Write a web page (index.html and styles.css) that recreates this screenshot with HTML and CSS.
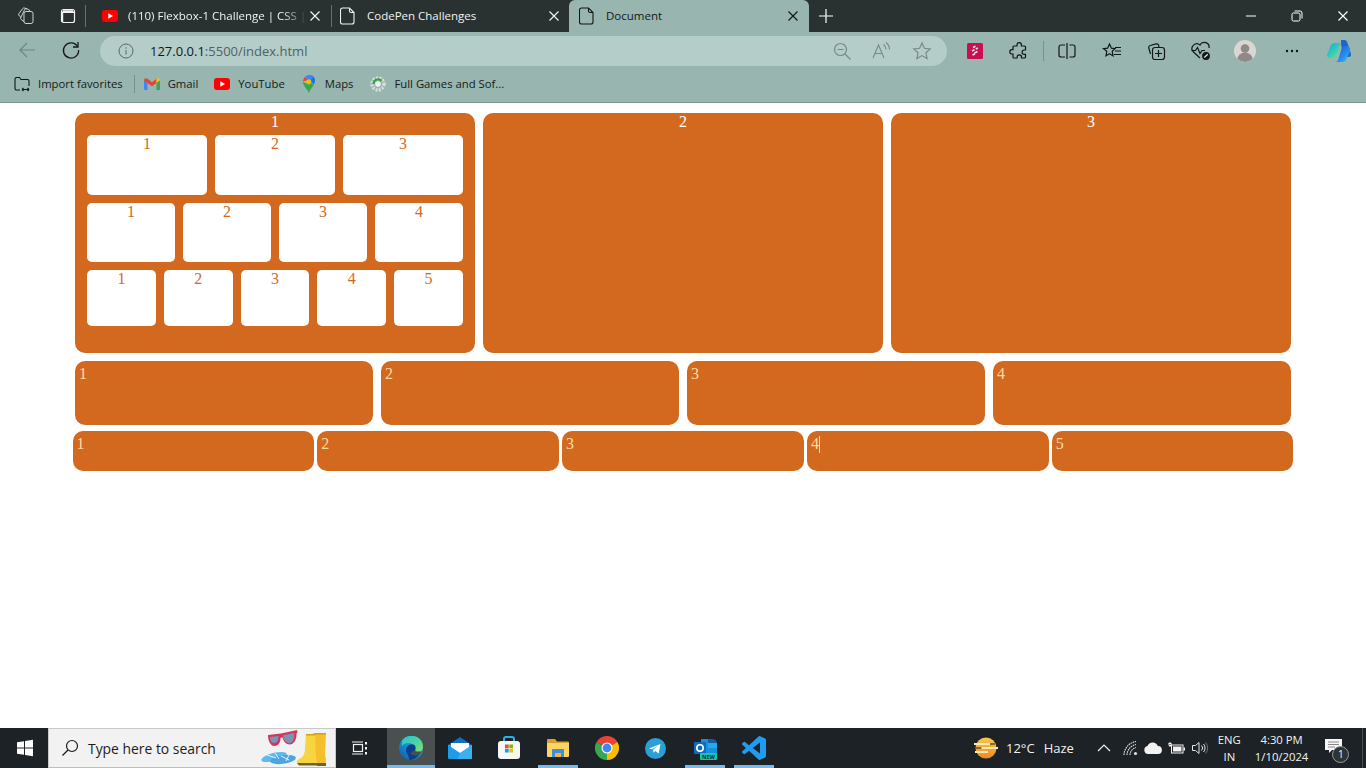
FILE: index.html
```html
<!DOCTYPE html>
<html>
  <head>
    <meta charset="UTF-8" />
    <title>Document</title>
    <link rel="stylesheet" href="styles.css">
  </head>
  <body>
    <svg class="sprites" width="0" height="0">
      <symbol id="doc" viewBox="0 0 16 18">
        <path d="M2.500 1h7l4.500 4.500V15a2 2 0 0 1-2 2h-9.500a2 2 0 0 1-2-2V3a2 2 0 0 1 2-2z M9.500 1v3a1.500 1.500 0 0 0 1.500 1.500h3" fill="none" stroke="currentColor" stroke-width="1.100"/>
      </symbol>
      <symbol id="yt" viewBox="0 0 16 12">
        <rect width="16" height="12" rx="3" fill="#f00"/>
        <path d="M6.300 3.300 11 6 6.300 8.700z" fill="#fff"/>
      </symbol>
      <symbol id="cross" viewBox="0 0 12 12">
        <path d="M1.500 1.500l9 9M10.500 1.500l-9 9" fill="none" stroke="currentColor" stroke-width="1.200"/>
      </symbol>
    </svg>

    <header class="chrome">
      <div class="tabstrip">
        <svg class="strip-btn" width="20" height="20" viewBox="0 0 20 20" fill="none" stroke="#dfe4e2" stroke-width=".9">
          <rect x="8" y="5.500" width="9" height="12" rx="2"/>
          <path d="M8 15.500 5.500 13.800a2 2 0 0 1-.6-2.500L8.500 3.800a2 2 0 0 1 2.600-.9L14 4.500"/>
          <path d="M5 11.500 3.300 10a2 2 0 0 1-.3-2.500L6.500 2.800a2 2 0 0 1 2.400-.7L11 3"/>
        </svg>
        <svg class="strip-btn strip-btn-second" width="16" height="16" viewBox="0 0 16 16" fill="none" stroke="#f2f4f3" stroke-width="1.200">
          <rect x="1.500" y="1.500" width="13" height="13" rx="2"/>
          <path d="M1.500 4.300h13M3 3h10" stroke-width="1.600"/>
          <path d="M2.600 4v10"/>
        </svg>
        <div class="tab tab-first">
          <svg class="favicon" width="16" height="12"><use href="#yt"/></svg>
          <span class="tab-title">(110) Flexbox-1 Challenge | CSS |</span>
          <svg class="tab-close" width="12" height="12"><use href="#cross"/></svg>
        </div>
        <div class="tab tab-second">
          <svg class="favicon" width="16" height="18"><use href="#doc"/></svg>
          <span class="tab-title">CodePen Challenges</span>
          <svg class="tab-close" width="12" height="12"><use href="#cross"/></svg>
        </div>
        <div class="tab tab-active">
          <svg class="favicon" width="16" height="18"><use href="#doc"/></svg>
          <span class="tab-title">Document</span>
          <svg class="tab-close" width="12" height="12"><use href="#cross"/></svg>
        </div>
        <svg class="new-tab" width="16" height="16" viewBox="0 0 16 16"><path d="M8 1v14M1 8h14" stroke="#fff" stroke-width="1.200"/></svg>
        <div class="window-btns">
          <svg width="12" height="12" viewBox="0 0 12 12"><path d="M1 6h10" stroke="#fff" stroke-width="1"/></svg>
          <svg width="12" height="12" viewBox="0 0 12 12" fill="none" stroke="#fff" stroke-width="1"><rect x="1" y="3" width="8" height="8" rx="1.500"/><path d="M3.500 1h5.500a2 2 0 0 1 2 2v5.500"/></svg>
          <svg class="win-close" width="12" height="12"><use href="#cross"/></svg>
        </div>
      </div>

      <div class="toolbar">
        <svg class="back" width="20" height="20" viewBox="0 0 20 20" fill="none" stroke="#6f8783" stroke-width="1.200"><path d="M18 10H3M10 3l-7 7 7 7"/></svg>
        <svg class="reload" width="20" height="20" viewBox="0 0 20 20" fill="none" stroke="#151a19" stroke-width="1.300"><path d="M16.500 6.500A7.600 7.600 0 1 0 17.600 10"/><path d="M17 2v5h-5"/></svg>
        <div class="address">
          <svg width="16" height="16" viewBox="0 0 16 16" fill="none" stroke="#59696a" stroke-width="1"><circle cx="8" cy="8" r="7"/><path d="M8 7v4.500M8 4.300v1.400"/></svg>
          <span class="url"><b>127.0.0.1</b>:5500/index.html</span>
          <div class="address-tools">
            <svg width="20" height="20" viewBox="0 0 20 20" fill="none" stroke="#778a88" stroke-width="1.200"><circle cx="8.500" cy="8.500" r="6"/><path d="M5.500 8.500h6M13 13l5.500 5.500"/></svg>
            <svg class="read-aloud" width="20" height="20" viewBox="0 0 20 20" fill="none" stroke="#778a88" stroke-width="1.100"><path d="M2 17 7.500 4 13 17M4 12.500h7"/><path d="M12.500 3.500a6 6 0 0 1 2.500 5M15 1.500a9 9 0 0 1 3.500 7"/></svg>
            <svg width="20" height="20" viewBox="0 0 20 20" fill="none" stroke="#778a88" stroke-width="1.200"><path d="M10 2l2.400 5.300 5.800.6-4.300 3.900 1.200 5.700-5.100-2.900-5.100 2.900 1.200-5.700L1.800 7.900l5.800-.6z"/></svg>
          </div>
        </div>
        <svg class="tool ext-s" width="16" height="16" viewBox="0 0 16 16"><rect width="16" height="16" rx="1.500" fill="#c80f51"/><path d="M6 4.500l2.500-1.200M8.800 6l2-1M5 8l2.500-1.200M7.500 10l3-1.500M5.500 12l2.500-1.200" fill="none" stroke="#f6e3ea" stroke-width="1.500"/></svg>
        <svg class="tool ext-puzzle" width="20" height="20" viewBox="0 0 20 20" fill="none" stroke="#111716" stroke-width="1.200"><path d="M8 3.800a2.200 2.200 0 0 1 4.400 0V5h3.100a1 1 0 0 1 1 1v3h-1.200a2.200 2.200 0 0 0 0 4.400h1.200v2.600a1 1 0 0 1-1 1h-3v-1a2.200 2.200 0 0 0-4.400 0v1H5a1 1 0 0 1-1-1v-3H3a2.200 2.200 0 0 1 0-4.400h1V6a1 1 0 0 1 1-1h3z"/></svg>
        <span class="tool-sep"></span>
        <svg class="tool ext-split" width="20" height="20" viewBox="0 0 20 20" fill="none" stroke="#111716" stroke-width="1.200"><path d="M8 4H4a2 2 0 0 0-2 2v8a2 2 0 0 0 2 2h4M12.500 4H16a2 2 0 0 1 2 2v8a2 2 0 0 1-2 2h-3.500M10 2v16"/></svg>
        <svg class="tool ext-fav" width="20" height="20" viewBox="0 0 20 20" fill="none" stroke="#111716" stroke-width="1.200"><path d="M7.500 3l1.900 4.200 3.600.4-2.800 2.700.8 4.600-3.500-2.100L4 14.900l.8-4.600L1.500 7.600l4.100-.4zM13 6.500h6M13 10h6M12 13.500h7"/></svg>
        <svg class="tool ext-coll" width="20" height="20" viewBox="0 0 20 20" fill="none" stroke="#111716" stroke-width="1.200"><path d="M4.500 13 2.800 7A2 2 0 0 1 4.200 4.500l6-1.600a2 2 0 0 1 2.400 1.300L13 6"/><rect x="6.500" y="6.500" width="12" height="12" rx="2.500"/><path d="M12.500 9v7M9 12.500h7"/></svg>
        <svg class="tool ext-heart" width="22" height="20" viewBox="0 0 22 20" fill="none" stroke="#111716" stroke-width="1.200"><path d="M10 17 3 10.500A4.800 4.800 0 0 1 10 4a4.800 4.800 0 0 1 9 3"/><path d="M1.500 9.500h4l2-3 2.500 6 2-3h3"/><circle cx="16" cy="15" r="4.500" fill="#111716" stroke="#98b5af"/><path d="M14.300 16.500l3.400-3.200" stroke="#dfe8e6"/></svg>
        <svg class="tool ext-avatar" width="22" height="22" viewBox="0 0 22 22"><circle cx="11" cy="11" r="11" fill="#d9d6d4"/><circle cx="11" cy="8.500" r="4.300" fill="#8f8a87"/><path d="M3.500 19a7.500 6.500 0 0 1 15 0 11 11 0 0 1-15 0z" fill="#8f8a87"/></svg>
        <svg class="tool ext-dots" width="14" height="4" viewBox="0 0 14 4"><circle cx="2" cy="2" r="1.200" fill="#111716"/><circle cx="7" cy="2" r="1.200" fill="#111716"/><circle cx="12" cy="2" r="1.200" fill="#111716"/></svg>
        <svg class="tool ext-copilot" width="24" height="24" viewBox="0 0 24 24">
          <defs>
            <linearGradient id="copA" x1="0" y1="0" x2="1" y2="1"><stop offset="0" stop-color="#1c9fe0"/><stop offset=".6" stop-color="#3bd4b0"/><stop offset="1" stop-color="#b6e04d"/></linearGradient>
            <linearGradient id="copB" x1="0" y1="0" x2="1" y2="1"><stop offset="0" stop-color="#1d4fd0"/><stop offset=".6" stop-color="#2690ea"/><stop offset="1" stop-color="#3ecbf0"/></linearGradient>
          </defs>
          <path d="M14 1h3.500c1.500 0 2.300 1 2.800 2.500L24 15c.4 1.500-.6 3-2 3h-4.500l-3.500-12z" fill="#1b66c9"/>
          <path d="M8.500 4h7c-1.300 0-2.300.9-2.700 2.300L10 16c-.6 2-1.500 3-3.500 3H3.200C1 19 -.4 17.500.2 15.500L3.500 7C4.300 5 6 4 8.500 4z" fill="url(#copA)"/>
          <path d="M17 7c-1.200 0-1.900.8-2.300 2l-3.200 11c-.4 1.500-1.500 3-3.500 3h7.500c2 0 3.300-1 4-3L23 12c.7-2.500-.8-5-3-5z" fill="url(#copB)"/>
        </svg>
      </div>

      <div class="favbar">
        <div class="fav">
          <svg width="16" height="16" viewBox="0 0 16 16" fill="none" stroke="#111716" stroke-width="1.100"><path d="M6 14H2.500A1.500 1.500 0 0 1 1 12.500V3a1.500 1.500 0 0 1 1.500-1.500h3L7 3.500h6.500A1.500 1.500 0 0 1 15 5v5"/><path d="M8 13.500h7M8 13.500l1.500-1.500M8 13.500 9.500 15M15 13.500 13.500 12M15 13.500 13.500 15"/></svg>
          <span>Import favorites</span>
        </div>
        <span class="fav-sep"></span>
        <div class="fav">
          <svg width="16" height="12" viewBox="0 0 16 12">
            <path d="M0 2v9a1 1 0 0 0 1 1h2.500V5z" fill="#4285f4"/>
            <path d="M16 2v9a1 1 0 0 1-1 1h-2.500V5z" fill="#34a853"/>
            <path d="M0 2.500C0 .5 2 -.5 3.500.8L8 4.300 12.500.8V5L8 8.300 3.500 5z" fill="#ea4335"/>
            <path d="M12.500.8C14-.5 16 .5 16 2.500L12.500 5z" fill="#fbbc04"/>
          </svg>
          <span>Gmail</span>
        </div>
        <div class="fav">
          <svg width="16" height="12"><use href="#yt"/></svg>
          <span>YouTube</span>
        </div>
        <div class="fav">
          <svg width="16" height="18" viewBox="0 0 16 18">
            <path d="M8 18C6.500 14.500 2 11 2 6.500L6 8.500C6.500 10 9.500 10 10 8l3 1c-1.500 3.500-4 5.500-5 9z" fill="#34a853"/>
            <path d="M2 6.500C2 4.500 3 3 4 2l3.500 3z" fill="#ea4335"/>
            <path d="M4 2c2.500-2.500 6.500-2.500 8.500-.5L8 6z" fill="#4285f4"/>
            <path d="M12.500 1.500C14.500 3.500 14.500 7 13 9l-5-3z" fill="#1a73e8"/>
            <path d="M2 6.500 7 5.500 6 8.500z" fill="#fbbc04"/>
            <circle cx="8" cy="6.500" r="2.300" fill="#fbbc04"/>
          </svg>
          <span>Maps</span>
        </div>
        <div class="fav fav-last">
          <svg width="16" height="16" viewBox="0 0 16 16">
            <circle cx="8" cy="8" r="6" fill="none" stroke="#d9dcdb" stroke-width="3.400" stroke-dasharray="2 1.200"/>
            <path d="M3.500 8a4.500 4.500 0 0 1 8-3" fill="none" stroke="#2ea43b" stroke-width="2"/>
            <circle cx="8" cy="8" r="2.800" fill="#f1f3f2"/>
          </svg>
          <span>Full Games and Sof...</span>
        </div>
      </div>
    </header>

    <main class="page">
      <section class="row-top">
        <div class="card">
          1
          <div class="inner-rows">
            <div class="inner-row inner-row-a">
              <div class="box">1</div>
              <div class="box">2</div>
              <div class="box">3</div>
            </div>
            <div class="inner-row inner-row-b">
              <div class="box">1</div>
              <div class="box">2</div>
              <div class="box">3</div>
              <div class="box">4</div>
            </div>
            <div class="inner-row inner-row-c">
              <div class="box">1</div>
              <div class="box">2</div>
              <div class="box">3</div>
              <div class="box">4</div>
              <div class="box">5</div>
            </div>
          </div>
        </div>
        <div class="card">2</div>
        <div class="card">3</div>
      </section>
      <section class="row-mid">
        <div class="strip">1</div>
        <div class="strip">2</div>
        <div class="strip">3</div>
        <div class="strip">4</div>
      </section>
      <section class="row-low">
        <div class="strip">1</div>
        <div class="strip">2</div>
        <div class="strip">3</div>
        <div class="strip">4<span class="caret"></span></div>
        <div class="strip">5</div>
      </section>
    </main>

    <footer class="taskbar">
      <div class="start">
        <svg width="18" height="18" viewBox="0 0 18 18" fill="#fff"><path d="M1 3.200 8 2.200V8.400H1zM9 2 17 .8V8.400H9zM1 9.500h7v6.300l-7-1zM9 9.500h8v7.700l-8-1.200z"/></svg>
      </div>
      <div class="search">
        <svg width="18" height="18" viewBox="0 0 18 18" fill="none" stroke="#1a1a1a" stroke-width="1.200"><circle cx="11" cy="7" r="5.500"/><path d="M7 11 1.500 16.500"/></svg>
        <span class="search-text">Type here to search</span>
        <svg class="search-art" width="66" height="38" viewBox="0 0 66 38">
          <path d="M7 6 20 4.500 34 1.500l2-.5.500 2.500-1 1c.3 6-2.500 11-7 11-3.500 0-6-3-7-7l-2 .3c.3 4.200-2 8.200-6 8.200S7 12 7 6z" fill="#d4365a"/>
          <path d="M9 8l8.500-1c.2 3.500-1.300 7-4.300 7S9 11.500 9 8zM22 6.300l11.300-2.300c.5 5-1.500 10.200-4.800 10.200S22 10.500 22 6.300z" fill="#7b93b4"/>
          <ellipse cx="13" cy="28" rx="13" ry="4" transform="rotate(-14 13 28)" fill="#62b8ec"/>
          <ellipse cx="22" cy="30.500" rx="13" ry="4.300" transform="rotate(-8 22 30.500)" fill="#4ba5e2"/>
          <path d="M6 26l9 3M14 24l4 6M20 27l8 4M28 26l-3 6" fill="none" stroke="#e3f2fc" stroke-width="1"/>
          <path d="M52 4h13l-1 22c1 3 1.200 6 .6 8H52z" fill="#f3bf2a"/>
          <path d="M45 5h9l1 22 1 7H36c-1-2 1-4 4-5 3-2 4-6 4-10z" fill="#f8d440"/>
          <path d="M45 5h9v1.500h-9zM54 4h11v1.500H54z" fill="#cfa21a"/>
          <path d="M36 34h20v2.500H38zM56 34h9v3h-9z" fill="#6e6132"/>
        </svg>
      </div>
      <svg class="task-view" width="18" height="18" viewBox="0 0 18 18" fill="none" stroke="#f2f2f2" stroke-width="1.200"><path d="M1 3h11M1 15h11"/><rect x="2.500" y="5.500" width="9" height="7"/><path d="M15 3v2.500M15 8v2.500M15 13v2.500" stroke-width="2"/></svg>

      <div class="task running current">
        <svg width="24" height="24" viewBox="0 0 24 24">
          <defs>
            <linearGradient id="edgeA" x1="0" y1="1" x2="1" y2="0"><stop offset="0" stop-color="#0c59a4"/><stop offset=".6" stop-color="#1b9de2"/><stop offset="1" stop-color="#33bfe0"/></linearGradient>
            <linearGradient id="edgeB" x1="0" y1="0" x2="1" y2="1"><stop offset="0" stop-color="#2bc0d8"/><stop offset=".6" stop-color="#4fd79a"/><stop offset="1" stop-color="#8fe25a"/></linearGradient>
          </defs>
          <circle cx="12" cy="12" r="12" fill="url(#edgeA)"/>
          <path d="M3 5C6-.5 14-1.500 19 1.500 23 4 25 9 23.500 13c-1 2.500-5 3-7.500 2 1-2 .5-5-2-6.500C10 6 5 7 3 10z" fill="url(#edgeB)"/>
          <path d="M9 19c-3-3-2.500-8 1-10 3-1.500 6-.5 6.500 2 .3 1.500-.5 3-.5 4-.3 1.500 3 2 6 1-2 4-6 8-11 8-1 0-1.500-3-2-5z" fill="#0d3f86"/>
          <path d="M15.800 14.800c1.500 1 5 1.500 7 .5-.8 1.500-2 3.200-3 3.900-2.500.5-6 .5-7.300-1.300-1.500-2 1-2.800 3.300-3.100z" fill="#4a4f50"/>
        </svg>
      </div>
      <div class="task">
        <svg width="24" height="22" viewBox="0 0 24 22">
          <path d="M12 0l12 8v2H0V8z" fill="#0f6fc0"/>
          <path d="M0 8h24v12a2 2 0 0 1-2 2H2a2 2 0 0 1-2-2z" fill="#28a8ea"/>
          <path d="M3 6h18v5l-9 6-9-6z" fill="#fff"/>
          <path d="M0 8l12 8 12-8v12a2 2 0 0 1-2 2H2a2 2 0 0 1-2-2z" fill="#1e9ce8"/>
          <path d="M24 8v14H10L12 16z" fill="#50c0f5" opacity=".6"/>
        </svg>
      </div>
      <div class="task">
        <svg width="24" height="24" viewBox="0 0 24 24">
          <path d="M7 6V3a2 2 0 0 1 2-2h6a2 2 0 0 1 2 2v3" fill="none" stroke="#29b0e8" stroke-width="2"/>
          <rect x="1" y="5" width="22" height="18" rx="3" fill="#f7f7f7"/>
          <rect x="8" y="8.500" width="3.700" height="3.700" fill="#f25022"/>
          <rect x="12.300" y="8.500" width="3.700" height="3.700" fill="#7fba00"/>
          <rect x="8" y="12.800" width="3.700" height="3.700" fill="#00a4ef"/>
          <rect x="12.300" y="12.800" width="3.700" height="3.700" fill="#ffb900"/>
        </svg>
      </div>
      <div class="task running">
        <svg width="22" height="20" viewBox="0 0 22 20">
          <path d="M0 2a1 1 0 0 1 1-1h7l2 2.500h11a1 1 0 0 1 1 1V7H0z" fill="#d9a02c"/>
          <path d="M0 5h22v13a1 1 0 0 1-1 1H1a1 1 0 0 1-1-1z" fill="#fcd664"/>
          <path d="M5 19v-7a1 1 0 0 1 1-1h10a1 1 0 0 1 1 1v7h-3v-4H8v4z" fill="#3f8fd2"/>
          <rect x="8" y="15" width="6" height="4" fill="#f2b33d"/>
        </svg>
      </div>
      <div class="task">
        <svg width="24" height="24" viewBox="0 0 24 24">
          <path d="M12 12 1.600 6A12 12 0 0 1 22.400 6z" fill="#ea4335"/>
          <path d="M12 12 22.400 6A12 12 0 0 1 12 24z" fill="#fbbc04"/>
          <path d="M12 12 12 24A12 12 0 0 1 1.600 6z" fill="#34a853"/>
          <circle cx="12" cy="12" r="5.500" fill="#fff"/>
          <circle cx="12" cy="12" r="4.400" fill="#4285f4"/>
        </svg>
      </div>
      <div class="task">
        <svg width="21" height="21" viewBox="0 0 21 21">
          <circle cx="10.500" cy="10.500" r="10.500" fill="#2a9fd8"/>
          <path d="M4 10.500 15.500 6l-1.800 9.500-3.500-2.500-1.700 1.700-.4-2.900 4.900-4.300-6 3.700z" fill="#fff"/>
        </svg>
      </div>
      <div class="task running">
        <svg width="24" height="24" viewBox="0 0 24 24">
          <path d="M8 3h9l7 4v10H8z" fill="#1490df"/>
          <path d="M15 3h4a5 5 0 0 1 5 4v4h-9z" fill="#0f5fa8"/>
          <rect x="15" y="7" width="9" height="5" fill="#28a8ea"/>
          <rect x="1" y="6" width="12" height="12" rx="1" fill="#0f6cbd"/>
          <circle cx="7" cy="12" r="3.200" fill="none" stroke="#fff" stroke-width="1.600"/>
          <rect x="7" y="17" width="17" height="7" rx="1" fill="#19c3b5"/>
          <text class="new-badge" x="15.500" y="22.800">NEW</text>
        </svg>
      </div>
      <div class="task running">
        <svg width="24" height="24" viewBox="0 0 24 24"><path fill="#1f9cf0" d="M23.150 2.587 18.210.21a1.494 1.494 0 0 0-1.705.29l-9.460 8.630-4.120-3.128a.999.999 0 0 0-1.276.057L.327 7.261A1 1 0 0 0 .326 8.740L3.899 12 .326 15.260a1 1 0 0 0 .001 1.479L1.650 17.940a.999.999 0 0 0 1.276.057l4.120-3.128 9.460 8.630a1.492 1.492 0 0 0 1.704.29l4.942-2.377A1.500 1.500 0 0 0 24 20.060V3.939a1.500 1.500 0 0 0-.85-1.352zm-5.146 14.861L10.826 12l7.178-5.448v10.896z"/></svg>
      </div>

      <div class="tray">
        <svg class="weather" width="24" height="22" viewBox="0 0 24 22">
          <defs><linearGradient id="sun" x1="0" y1="0" x2="0" y2="1"><stop offset="0" stop-color="#f9c74a"/><stop offset="1" stop-color="#ef8a1d"/></linearGradient></defs>
          <circle cx="12" cy="11" r="10.500" fill="url(#sun)"/>
          <path d="M0 7h16M8 11h16M1 15h13" stroke="#fbe9b8" stroke-width="1.800"/>
          <path d="M16 7h5M2 11h5" stroke="#1e2326" stroke-width="1"/>
        </svg>
        <span class="temp">12°C</span>
        <span class="cond">Haze</span>
        <svg class="caret-up" width="14" height="8" viewBox="0 0 14 8" fill="none" stroke="#f2f2f2" stroke-width="1.200"><path d="M1 7l6-6 6 6"/></svg>
        <svg class="wifi" width="16" height="16" viewBox="0 0 16 16" fill="none" stroke="#e0e0e0" stroke-width="1.100"><path d="M1 15A14 14 0 0 1 13 1.500M4 15A11 11 0 0 1 13 4.500M7 15a8 8 0 0 1 6-7.500" stroke-dasharray="1.600 .7"/><circle cx="12.500" cy="13.500" r="1.600" fill="#e0e0e0" stroke="none"/></svg>
        <svg class="cloud" width="18" height="12" viewBox="0 0 18 12"><path d="M4 12a4 4 0 0 1-.5-7.900A5.500 5.500 0 0 1 13.800 4 4 4 0 0 1 14 12z" fill="#f2f2f2"/></svg>
        <svg class="battery" width="17" height="12" viewBox="0 0 17 12"><path d="M.5 1.500h3M2 0v1.500M1 1.500v2h2v-2M2 3.500V5" fill="none" stroke="#f2f2f2"/><rect x="3.500" y="3" width="11.500" height="8" fill="none" stroke="#f2f2f2"/><rect x="5" y="4.500" width="8.500" height="5" fill="#f2f2f2"/><rect x="15.500" y="5.500" width="1.500" height="3" fill="#f2f2f2"/></svg>
        <svg class="speaker" width="16" height="14" viewBox="0 0 16 14" fill="none" stroke="#e6e6e6" stroke-width="1"><path d="M.5 4.500h3L7 1.500v11l-3.500-3h-3zM9.500 4.500a3.500 3.500 0 0 1 0 5M11.500 3a6 6 0 0 1 0 8"/><path d="M13.500 1.500a8 8 0 0 1 0 11" stroke="#6d7275"/></svg>
        <div class="lang"><span>ENG</span><span>IN</span></div>
        <div class="clock"><span>4:30 PM</span><span>1/10/2024</span></div>
        <div class="notify">
          <svg width="18" height="14" viewBox="0 0 18 14"><path d="M0 0h17v11H7l-3 3v-3H0z" fill="#f7f7f7"/><path d="M3 3h11M3 5.500h11M3 8h7" stroke="#6a6f72" stroke-width=".8"/></svg>
          <span class="notify-badge">1</span>
        </div>
        <span class="tray-end"></span>
      </div>
    </footer>
  </body>
</html>
```

FILE: styles.css
```css
/* page */
html, body {
  height: 100%;
}
body {
  margin: 0;
  height: 768px;
  display: flex;
  flex-direction: column;
  overflow: hidden;
  background: #fff;
  font-family: "Liberation Serif", serif;
  font-size: 16px;
}
.sprites {
  position: absolute;
}
svg {
  flex: none;
  display: block;
}

/* browser frame */
.chrome {
  flex: none;
  font-family: "Open Sans", sans-serif;
  background: #98b5af;
  border-bottom: 1px solid #7f9792;
}
.tabstrip {
  height: 32px;
  display: flex;
  align-items: center;
  padding-left: 16px;
  background: #293230;
  color: #f1f3f2;
}
.strip-btn-second {
  margin-left: 24px;
  margin-right: 9px;
}
.tab {
  height: 32px;
  box-sizing: border-box;
  display: flex;
  align-items: center;
  font-size: 11.5px;
  border-left: 1px solid transparent;
}
.tab-first {
  width: 246px;
  padding: 0 10px 0 16px;
  border-image: linear-gradient(#293230 6px, #66706e 6px, #66706e 26px, #293230 26px) 1;
}
.tab-second {
  width: 238px;
  padding: 0 9px 0 8px;
  border-image: linear-gradient(#293230 6px, #66706e 6px, #66706e 26px, #293230 26px) 1;
}
.tab-active {
  width: 240px;
  padding: 0 10px 0 10px;
  border: 0;
  border-radius: 6px 6px 0 0;
  background: #98b5af;
  color: #131817;
}
.tab-first .favicon {
  margin-right: 10px;
}
.tab-second .favicon, .tab-active .favicon {
  margin-right: 11px;
}
.tab-title {
  flex: 1;
  padding-bottom: 2px;
  white-space: nowrap;
}
.tab-first .tab-title {
  -webkit-mask-image: linear-gradient(90deg, #000 86%, transparent 100%);
  margin-right: 2px;
}
.new-tab {
  margin-left: 9px;
}
.window-btns {
  margin-left: auto;
  display: flex;
  gap: 34px;
  padding-right: 17px;
  color: #fff;
}

/* toolbar */
.toolbar {
  height: 36px;
  display: flex;
  align-items: center;
}
.back {
  margin-left: 17px;
}
.reload {
  margin-left: 24px;
}
.address {
  width: 847px;
  height: 30px;
  margin: 2px 0 0 19px;
  box-sizing: border-box;
  padding: 0 15px 0 18px;
  display: flex;
  align-items: center;
  border-radius: 15px;
  background: #b5cdc8;
}
.url {
  margin-left: 16px;
  font-size: 13px;
  color: #4f6262;
}
.url b {
  font-weight: 400;
  color: #10171d;
}
.address-tools {
  margin-left: auto;
  display: flex;
  gap: 20px;
}
.read-aloud {
  margin: 0 1px 0 -1px;
}
.tool {
  margin-top: 2px;
}
.ext-s { margin-left: 20px; }
.ext-puzzle { margin-left: 26px; }
.tool-sep {
  width: 1px;
  height: 20px;
  margin: 2px 0 0 14px;
  background: #7c918d;
}
.ext-split { margin-left: 13px; }
.ext-fav { margin-left: 25px; }
.ext-coll { margin-left: 24px; }
.ext-heart { margin-left: 24px; }
.ext-avatar { margin-left: 22px; }
.ext-dots { margin-left: 29px; }
.ext-copilot { margin-left: 28px; }

/* bookmarks */
.favbar {
  height: 34px;
  display: flex;
  align-items: center;
  gap: 16px;
  padding: 0 0 3px 14px;
  box-sizing: border-box;
  font-size: 11.300px;
  color: #151b1a;
}
.fav {
  display: flex;
  align-items: center;
  gap: 8px;
}
.fav-last {
  margin-left: 1px;
}
.fav-sep {
  width: 1px;
  height: 18px;
  margin: 0 -7px 0 -5px;
  background: #7c918d;
}

/* flexbox boxes */
.page {
  flex: 1;
  padding: 10px 75px 0;
}
.row-top, .row-mid, .row-low {
  display: flex;
}
.row-top {
  gap: 8px;
  height: 240px;
}
.card {
  flex: 1;
  padding: 0 12px;
  border-radius: 10px;
  background: #d2691e;
  color: #fff;
  text-align: center;
}
.inner-rows {
  margin-top: 4px;
  display: flex;
  flex-direction: column;
  gap: 8px;
}
.inner-row {
  display: flex;
  gap: 8px;
}
.inner-row-a { height: 60px; }
.inner-row-b { height: 59px; }
.inner-row-c { height: 56px; }
.box {
  flex: 1;
  border-radius: 5px;
  background: #fff;
  color: #d2691e;
}
.row-mid {
  gap: 8px;
  height: 64px;
  margin-top: 8px;
}
.row-low {
  gap: 3px;
  height: 40px;
  margin: 6px -2.500px 0;
}
.strip {
  flex: 1;
  padding: 4px;
  border-radius: 10px;
  background: #d2691e;
  color: #fbdca8;
}
.caret {
  display: inline-block;
  height: 17px;
  vertical-align: -4px;
  border-left: 1px solid #fbdca8;
}

/* windows taskbar */
.taskbar {
  flex: none;
  height: 40px;
  display: flex;
  align-items: center;
  background: #1c2225;
  color: #f2f2f2;
  font-family: "Open Sans", sans-serif;
  font-size: 12px;
}
.start {
  width: 48px;
  padding-left: 16px;
  box-sizing: border-box;
}
.search {
  width: 288px;
  height: 40px;
  box-sizing: border-box;
  display: flex;
  align-items: center;
  padding: 0 8px 0 12px;
  border: 1px solid #c9c9c9;
  border-bottom-color: #bdbdbd;
  background: #f2f2f2;
  color: #1d1d1d;
}
.search-text {
  margin-left: 9px;
  font-size: 13.900px;
}
.search-art {
  margin-left: auto;
}
.task-view {
  margin: 0 17px 0 15px;
}
.task {
  width: 49px;
  height: 40px;
  box-sizing: border-box;
  position: relative;
  display: flex;
  align-items: center;
  justify-content: center;
}
.current {
  border-left: 1px solid #1c2225;
  background: #4a4f50;
}
.running::after {
  content: "";
  position: absolute;
  left: 5px;
  right: 4px;
  bottom: 0;
  height: 3px;
  background: #76b9ed;
}
.current::after {
  left: 0;
  right: 0;
}
.new-badge {
  font-family: "Open Sans", sans-serif;
  font-size: 5.500px;
  font-weight: 700;
  text-anchor: middle;
  fill: #0b2f33;
}
.tray {
  flex: 1;
  height: 40px;
  display: flex;
  align-items: center;
  font-size: 12px;
}
.weather {
  margin-left: 196px;
}
.temp {
  margin-left: 8px;
  font-size: 13px;
}
.cond {
  margin-left: 9px;
  font-size: 13px;
}
.caret-up { margin-left: 23px; }
.wifi { margin-left: 12px; }
.cloud { margin-left: 5px; }
.battery { margin-left: 6px; }
.speaker { margin-left: 7px; }
.lang, .clock {
  display: flex;
  flex-direction: column;
  align-items: center;
  line-height: 17px;
  font-size: 11.300px;
}
.lang { margin-left: 10px; }
.clock { margin-left: 14px; }
.notify {
  margin-left: 17px;
  position: relative;
  width: 24px;
  height: 26px;
  padding-top: 4px;
  box-sizing: border-box;
}
.notify-badge {
  position: absolute;
  left: 7px;
  top: 11px;
  width: 15px;
  height: 15px;
  border: 1px solid #9a9a9a;
  border-radius: 50%;
  background: #2e3436;
  font-size: 10px;
  line-height: 15px;
  text-align: center;
}
.tray-end {
  width: 1px;
  height: 40px;
  margin-left: auto;
  margin-right: 3px;
  background: #4a5053;
}
```
